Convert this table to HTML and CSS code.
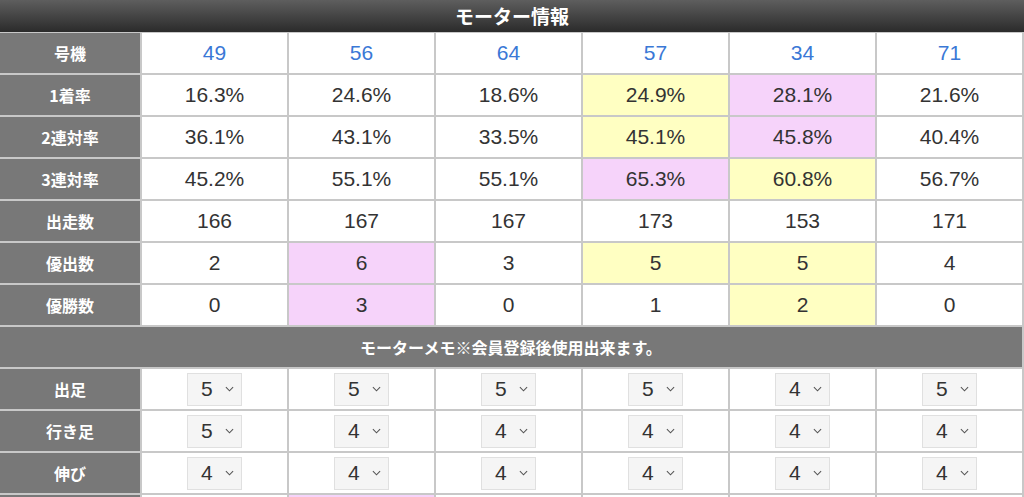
FILE: index.html
```html
<!DOCTYPE html>
<html lang="ja">
<head>
<meta charset="utf-8">
<link rel="stylesheet" href="styles.css">
</head>
<body>
<div class="title">モーター情報</div>
<table class="motor">
  <colgroup>
    <col class="c-label"><col class="c-data"><col class="c-data"><col class="c-data"><col class="c-data"><col class="c-data"><col class="c-data">
  </colgroup>
  <tbody>
    <tr><th>号機</th><td class="no">49</td><td class="no">56</td><td class="no">64</td><td class="no">57</td><td class="no">34</td><td class="no">71</td></tr>
    <tr><th>1着率</th><td>16.3%</td><td>24.6%</td><td>18.6%</td><td class="y">24.9%</td><td class="p">28.1%</td><td>21.6%</td></tr>
    <tr><th>2連対率</th><td>36.1%</td><td>43.1%</td><td>33.5%</td><td class="y">45.1%</td><td class="p">45.8%</td><td>40.4%</td></tr>
    <tr><th>3連対率</th><td>45.2%</td><td>55.1%</td><td>55.1%</td><td class="p">65.3%</td><td class="y">60.8%</td><td>56.7%</td></tr>
    <tr><th>出走数</th><td>166</td><td>167</td><td>167</td><td>173</td><td>153</td><td>171</td></tr>
    <tr><th>優出数</th><td>2</td><td class="p">6</td><td>3</td><td class="y">5</td><td class="y">5</td><td>4</td></tr>
    <tr><th>優勝数</th><td>0</td><td class="p">3</td><td>0</td><td>1</td><td class="y">2</td><td>0</td></tr>
    <tr><th class="memo" colspan="7">モーターメモ※会員登録後使用出来ます。</th></tr>
    <tr><th>出足</th>
      <td><span class="sel">5<svg viewBox="0 0 10 6"><path d="M1 1l4 4 4-4"/></svg></span></td>
      <td><span class="sel">5<svg viewBox="0 0 10 6"><path d="M1 1l4 4 4-4"/></svg></span></td>
      <td><span class="sel">5<svg viewBox="0 0 10 6"><path d="M1 1l4 4 4-4"/></svg></span></td>
      <td><span class="sel">5<svg viewBox="0 0 10 6"><path d="M1 1l4 4 4-4"/></svg></span></td>
      <td><span class="sel">4<svg viewBox="0 0 10 6"><path d="M1 1l4 4 4-4"/></svg></span></td>
      <td><span class="sel">5<svg viewBox="0 0 10 6"><path d="M1 1l4 4 4-4"/></svg></span></td>
    </tr>
    <tr><th>行き足</th>
      <td><span class="sel">5<svg viewBox="0 0 10 6"><path d="M1 1l4 4 4-4"/></svg></span></td>
      <td><span class="sel">4<svg viewBox="0 0 10 6"><path d="M1 1l4 4 4-4"/></svg></span></td>
      <td><span class="sel">4<svg viewBox="0 0 10 6"><path d="M1 1l4 4 4-4"/></svg></span></td>
      <td><span class="sel">4<svg viewBox="0 0 10 6"><path d="M1 1l4 4 4-4"/></svg></span></td>
      <td><span class="sel">4<svg viewBox="0 0 10 6"><path d="M1 1l4 4 4-4"/></svg></span></td>
      <td><span class="sel">4<svg viewBox="0 0 10 6"><path d="M1 1l4 4 4-4"/></svg></span></td>
    </tr>
    <tr><th>伸び</th>
      <td><span class="sel">4<svg viewBox="0 0 10 6"><path d="M1 1l4 4 4-4"/></svg></span></td>
      <td><span class="sel">4<svg viewBox="0 0 10 6"><path d="M1 1l4 4 4-4"/></svg></span></td>
      <td><span class="sel">4<svg viewBox="0 0 10 6"><path d="M1 1l4 4 4-4"/></svg></span></td>
      <td><span class="sel">4<svg viewBox="0 0 10 6"><path d="M1 1l4 4 4-4"/></svg></span></td>
      <td><span class="sel">4<svg viewBox="0 0 10 6"><path d="M1 1l4 4 4-4"/></svg></span></td>
      <td><span class="sel">4<svg viewBox="0 0 10 6"><path d="M1 1l4 4 4-4"/></svg></span></td>
    </tr>
    <tr class="more"><th></th><td></td><td class="p"></td><td></td><td></td><td></td><td></td></tr>
  </tbody>
</table>
</body>
</html>
```

FILE: styles.css
```css
html, body {
  margin: 0;
  padding: 0;
  background: #fff;
}
body {
  font-family: "Liberation Sans", Arial, "Noto Sans CJK JP", sans-serif;
  width: 1024px;
}
.title {
  height: 32px;
  line-height: 32px;
  text-align: center;
  color: #fff;
  font-family: "Noto Sans CJK JP", sans-serif;
  font-weight: bold;
  font-size: 19px;
  background: linear-gradient(#5e5e5e, #2b2b2b);
}
.motor {
  border-collapse: collapse;
  table-layout: fixed;
  width: 1024px;
}
.c-label { width: 141px; }
.c-data { width: 147px; }
.motor th, .motor td {
  border: 2px solid #c8c8c8;
  height: 40px;
  padding: 0;
  text-align: center;
  vertical-align: middle;
}
.motor tr:first-child th, .motor tr:first-child td { border-top: 1px solid #c8c8c8; }
.motor th:first-child { border-left: none; }
.motor th {
  background: #787878;
  color: #fff;
  font-family: "Noto Sans CJK JP", sans-serif;
  font-weight: bold;
  font-size: 16px;
}
.motor td {
  font-size: 21px;
  color: #333;
}
.motor td.no { color: #3a78d6; }
.motor td.y { background: #ffffc2; }
.motor td.p { background: #f6d3fa; }
.motor th.memo { font-size: 16px; }
.sel {
  display: inline-flex;
  align-items: center;
  justify-content: space-between;
  box-sizing: border-box;
  width: 55px;
  height: 33px;
  padding: 0 7px 0 13px;
  background: #f5f5f5;
  border: 1px solid #e0e0e0;
  font-size: 21px;
  color: #333;
  vertical-align: middle;
}
.sel svg {
  width: 9px;
  height: 6px;
  fill: none;
  stroke: #555;
  stroke-width: 1.2;
}
```
